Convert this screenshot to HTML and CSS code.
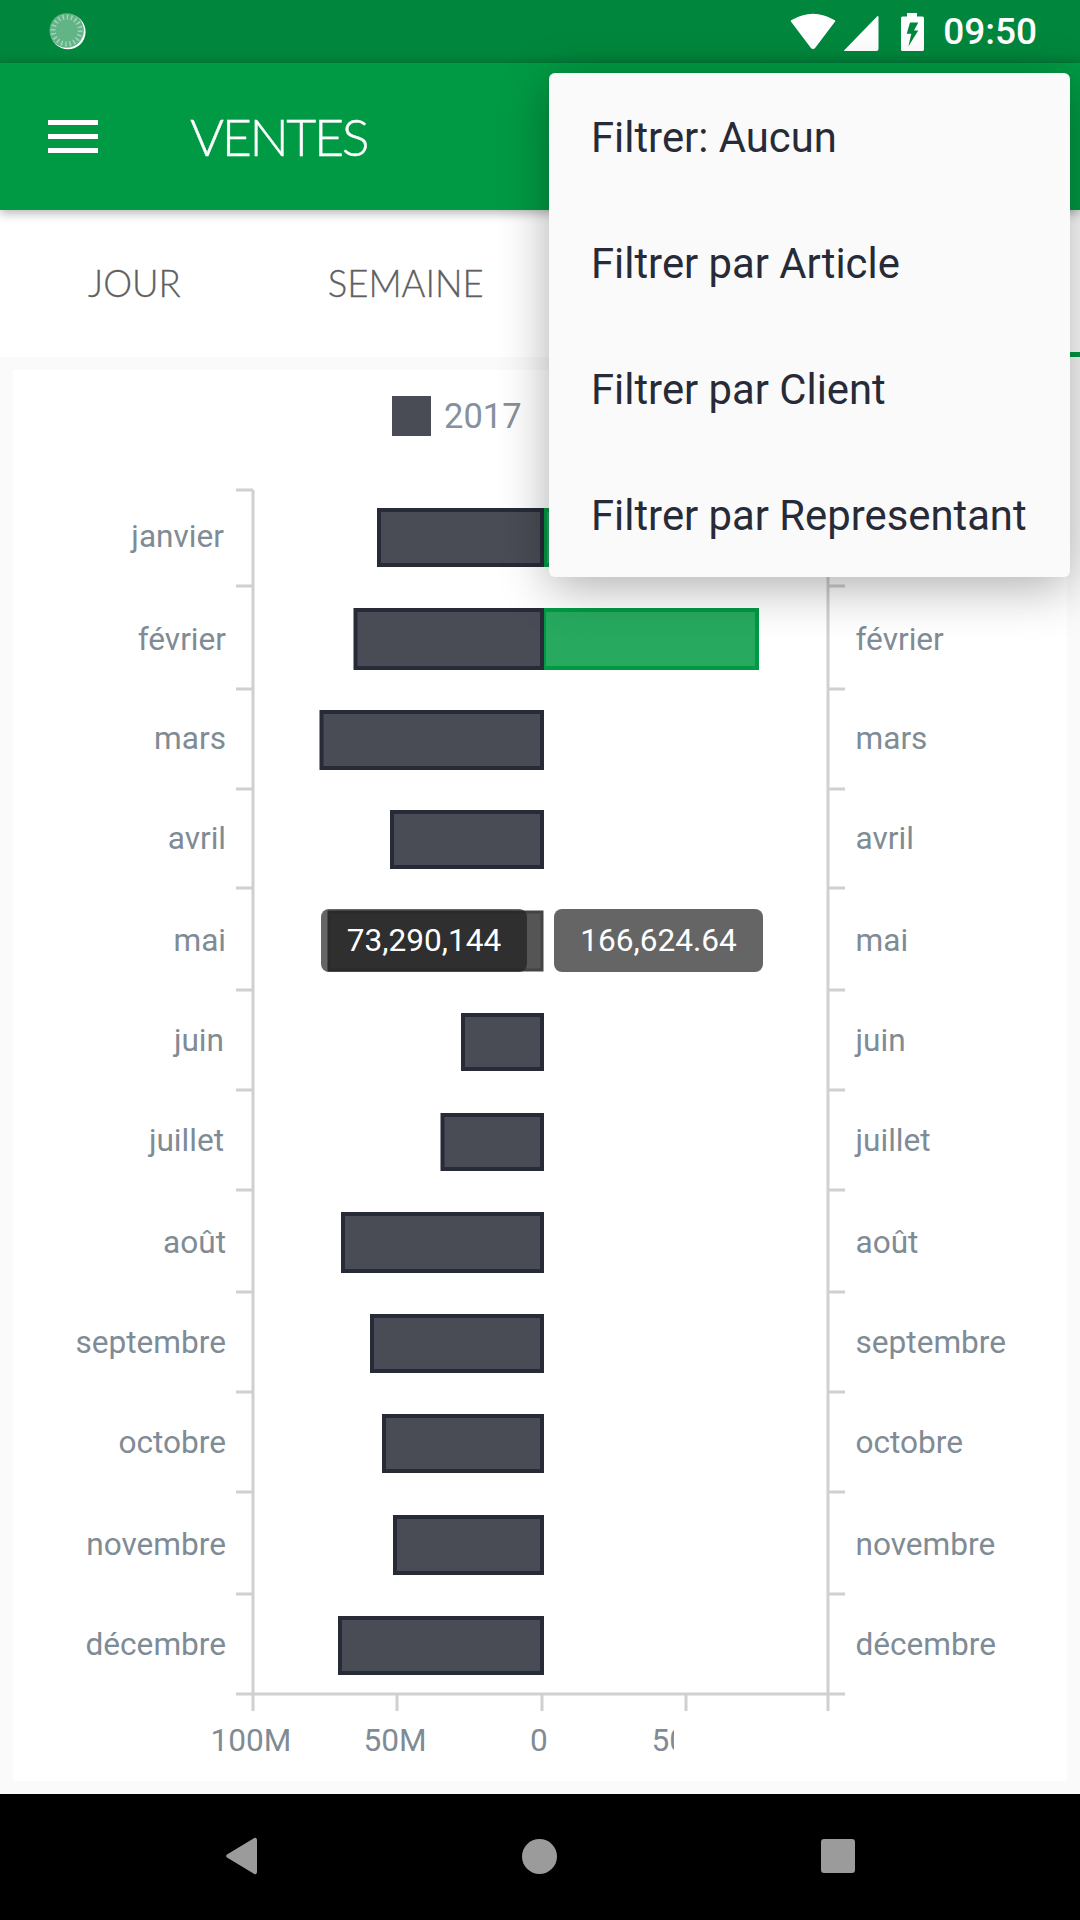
FILE: index.html
```html
<!DOCTYPE html>
<html lang="fr">
<head>
<meta charset="utf-8">
<title>Ventes</title>
<link rel="stylesheet" href="styles.css">
</head>
<body>
<div class="screen">
  <header class="statusbar">
    <svg class="spinner" width="40" height="40" viewBox="0 0 40 40">
      <circle cx="20" cy="20.700" r="17.600" fill="#fff"/>
      <circle cx="18.700" cy="19.500" r="17.200" fill="#62b487"/>
      <circle cx="18.700" cy="19.500" r="13.500" fill="none" stroke="#a0d4b5" stroke-width="5" pathLength="20" stroke-dasharray=".36 .64"/>
    </svg>
    <div class="status-right">
      <svg class="st-wifi" width="46" height="38" viewBox="0 0 46 38"><path d="M1.500 8Q23-5 44.500 8L24.500 34.500a2 2 0 0 1-3 0Z" fill="#fff" stroke="#fff" stroke-width="1.500" stroke-linejoin="round"/></svg>
      <svg class="st-signal" width="36" height="36" viewBox="0 0 36 36"><path d="M1 35.500 34.500 1a1 1 0 0 1 1 1V34a2 2 0 0 1-2 2H1Z" fill="#fff"/></svg>
      <svg class="st-batt" width="23" height="38" viewBox="0 0 23 38"><path fill-rule="evenodd" d="M6 0H16V3.500H21.500a1.500 1.500 0 0 1 1.500 1.500V36.500a1.500 1.500 0 0 1-1.500 1.500H1.500a1.500 1.500 0 0 1-1.500-1.500V5a1.500 1.500 0 0 1 1.500-1.500H6ZM9 9.500 5.700 20.800H10.300L7.300 33.500 17.300 17.500H13L17.300 9.500Z" fill="#fff"/></svg>
      <span class="clock">09:50</span>
    </div>
  </header>

  <div class="appbar">
    <div class="hamburger"><span></span><span></span><span></span></div>
    <h1 class="title">VENTES</h1>
  </div>

  <nav class="tabs">
    <span class="tab tab-jour">JOUR</span>
    <span class="tab tab-semaine">SEMAINE</span>
    <span class="tab-indicator"></span>
  </nav>

  <main class="content">
    <section class="card">
      <div class="legend"><span class="swatch"></span><span class="legend-text">2017</span></div>
      <svg class="chart" width="1054" height="1319" viewBox="13 462 1054 1319">
        <defs><clipPath id="xclip"><rect x="13" y="1700" width="661" height="80"/></clipPath></defs>

        <g class="axis">
          <path d="M253 490V1711M828 490V1711M236 1694H845"/>
          <path d="M236 490H253M236 586H253M236 689H253M236 789H253M236 888H253M236 990H253M236 1090H253M236 1190H253M236 1292H253M236 1392H253M236 1492H253M236 1594H253"/>
          <path d="M828 586H845M828 689H845M828 789H845M828 888H845M828 990H845M828 1090H845M828 1190H845M828 1292H845M828 1392H845M828 1492H845M828 1594H845"/>
          <path d="M397 1694V1711M542 1694V1711M686 1694V1711"/>
        </g>

        <g class="bar-green">
          <rect x="545" y="510" width="40" height="55"/>
          <rect x="544" y="610" width="213" height="58"/>
        </g>
        <g class="bar-dark">
          <rect x="379" y="510" width="163" height="55"/>
          <rect x="355.500" y="610" width="186.500" height="58"/>
          <rect x="321.500" y="712" width="220.500" height="56"/>
          <rect x="392" y="812" width="150" height="55"/>
          <rect x="463" y="1015" width="79" height="54"/>
          <rect x="442.500" y="1115" width="99.500" height="54"/>
          <rect x="343" y="1214" width="199" height="57"/>
          <rect x="372" y="1316" width="170" height="55"/>
          <rect x="384" y="1416" width="158" height="55"/>
          <rect x="395" y="1517" width="147" height="56"/>
          <rect x="340" y="1618" width="202" height="55"/>
        </g>
        <rect class="bar-mai" x="329" y="912" width="213" height="58"/>

        <g class="labels-left">
          <text x="224" y="547">janvier</text>
          <text x="226" y="649.500">février</text>
          <text x="226" y="749">mars</text>
          <text x="226" y="849">avril</text>
          <text x="226" y="951">mai</text>
          <text x="224" y="1051">juin</text>
          <text x="224" y="1151">juillet</text>
          <text x="226" y="1253">août</text>
          <text x="226" y="1353">septembre</text>
          <text x="226" y="1453">octobre</text>
          <text x="226" y="1555">novembre</text>
          <text x="226" y="1655">décembre</text>
        </g>
        <g class="labels-right">
          <text x="855.500" y="649.500">février</text>
          <text x="855.500" y="749">mars</text>
          <text x="855.500" y="849">avril</text>
          <text x="855.500" y="951">mai</text>
          <text x="855.500" y="1051">juin</text>
          <text x="855.500" y="1151">juillet</text>
          <text x="855.500" y="1253">août</text>
          <text x="855.500" y="1353">septembre</text>
          <text x="855.500" y="1453">octobre</text>
          <text x="855.500" y="1555">novembre</text>
          <text x="855.500" y="1655">décembre</text>
        </g>
        <g class="labels-x" clip-path="url(#xclip)">
          <text x="251" y="1751">100M</text>
          <text x="395" y="1751">50M</text>
          <text x="539" y="1751">0</text>
          <text x="683" y="1751">50M</text>
        </g>

        <rect class="tip" x="321" y="909" width="206" height="63" rx="8"/>
        <rect class="tip" x="554" y="909" width="209" height="63" rx="8"/>
        <text class="tip-text" x="424" y="951">73,290,144</text>
        <text class="tip-text" x="658.500" y="951">166,624.64</text>
      </svg>
    </section>
  </main>

  <footer class="navbar">
    <svg class="nav-back" width="34" height="38" viewBox="0 0 34 38"><path d="M28.500 1.500a2 2 0 0 1 3.500 1.500V35a2 2 0 0 1-3.500 1.500L2 20.500a2 2 0 0 1 0-3Z" fill="#9b9b9b"/></svg>
    <span class="nav-home"></span>
    <span class="nav-square"></span>
  </footer>

  <ul class="menu">
    <li>Filtrer: Aucun</li>
    <li>Filtrer par Article</li>
    <li>Filtrer par Client</li>
    <li>Filtrer par Representant</li>
  </ul>
</div>
</body>
</html>
```

FILE: styles.css
```css
* { box-sizing: border-box; }
html, body { margin: 0; padding: 0; }
body { font-family: Roboto, "Noto Sans", sans-serif; background: #fafafa; }

.screen {
  position: relative;
  width: 1080px;
  height: 1920px;
  display: flex;
  flex-direction: column;
  overflow: hidden;
}

/* status bar */
.statusbar {
  height: 63px;
  flex: none;
  background: linear-gradient(#00873d 80%, #00813a);
  display: flex;
  align-items: center;
  justify-content: space-between;
  padding: 0 43px 0 48px;
}
.spinner { margin-top: -1px; }
.status-right { display: flex; align-items: center; }
.st-wifi { margin-top: 1px; }
.st-signal { margin-left: 7px; margin-top: 2px; }
.st-batt { margin-left: 22px; }
.clock {
  margin-left: 19px;
  font-size: 37px;
  font-weight: 500;
  color: #fff;
}

/* app bar */
.appbar {
  height: 147px;
  flex: none;
  background: #009a44;
  display: flex;
  align-items: center;
  padding-left: 48px;
  box-shadow: 0 3px 10px rgba(0, 0, 0, .3);
  position: relative;
  z-index: 1;
}
.hamburger { width: 50px; margin-top: -1px; display: flex; flex-direction: column; gap: 9px; }
.hamburger span { display: block; height: 5px; background: #fff; }
.title {
  margin: -2px 0 0 92px;
  font-family: Lato, sans-serif;
  font-weight: 300;
  font-size: 52px;
  letter-spacing: -2.400px;
  -webkit-text-stroke: .4px #fff;
  color: #fff;
}

/* tabs */
.tabs {
  height: 147px;
  flex: none;
  background: #fff;
  display: flex;
  align-items: center;
  padding-bottom: 2px;
  position: relative;
}
.tab {
  font-family: Lato, sans-serif;
  font-weight: 300;
  font-size: 36.500px;
  color: #5f5f5f;
  -webkit-text-stroke: .3px #5f5f5f;
}
.tab-jour { margin-left: 88px; }
.tab-semaine { margin-left: 147px; }
.tab-indicator {
  position: absolute;
  left: 1000px;
  right: 0;
  bottom: 0;
  height: 5px;
  background: #009a44;
}

/* content */
.content { flex: 1; background: #fafafa; padding: 13px; }
.card { background: #fff; height: 100%; overflow: hidden; }
.legend {
  height: 92px;
  padding-top: 26px;
  padding-left: 379px;
  display: flex;
  align-items: flex-start;
  gap: 13px;
}
.swatch { width: 39px; height: 40px; background: #4a4c55; }
.legend-text { font-size: 34.500px; line-height: 40px; color: #86919c; }
.chart { display: block; }

.axis path { fill: none; stroke: #d0d0d0; stroke-width: 3; }
.bar-dark rect { fill: #4a4c55; stroke: #272b38; stroke-width: 4; }
.bar-green rect { fill: #27a960; stroke: #009a44; stroke-width: 4; }
.bar-mai { fill: #555; stroke: #444; stroke-width: 3; }
.labels-left text, .labels-right text, .labels-x text { font-size: 31.600px; fill: #7f8b95; }
.labels-left text { text-anchor: end; }
.labels-x text { text-anchor: middle; }
.tip { fill: rgba(30, 30, 30, .688); }
.tip-text { font-size: 31.600px; fill: #fff; text-anchor: middle; }

/* navigation bar */
.navbar {
  height: 126px;
  flex: none;
  background: #000;
  display: flex;
  align-items: center;
  padding: 0 0 2px 225px;
}
.nav-home { width: 35px; height: 35px; border-radius: 50%; background: #9b9b9b; margin-left: 263px; }
.nav-square { width: 34px; height: 34px; border-radius: 3px; background: #9b9b9b; margin-left: 264px; }

/* overflow menu */
.menu {
  position: absolute;
  left: 549px;
  top: 73px;
  width: 521px;
  height: 504px;
  margin: 0;
  padding: 1px 0 0;
  list-style: none;
  background: #fafafa;
  border-radius: 6px;
  box-shadow: 0 10px 50px rgba(0, 0, 0, .32);
  z-index: 2;
}
.menu li {
  height: 126px;
  padding-left: 42px;
  display: flex;
  align-items: center;
  font-size: 41.800px;
  color: #272b38;
  white-space: nowrap;
}
```
